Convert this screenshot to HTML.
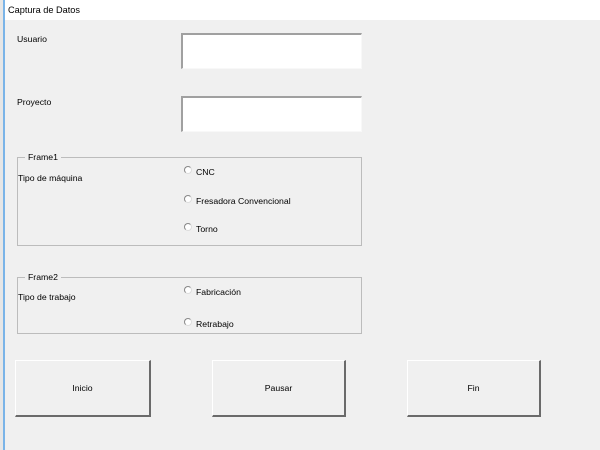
<!DOCTYPE html>
<html><head><meta charset="utf-8"><style>
*{margin:0;padding:0;box-sizing:border-box}
body{width:600px;height:450px;background:#f0f0f0;font-family:"Liberation Sans",sans-serif;font-size:8.7px;color:#000;position:relative;overflow:hidden}
.a{position:absolute}
.tb{background:#fff;border-top:2px solid #a0a0a0;border-left:2px solid #a0a0a0;border-right:1px solid #f8f8f8;border-bottom:1px solid #f8f8f8}
.fr{border:1px solid #bcbcbc}
.leg{background:#f0f0f0;padding:0 3px}
.r{width:8px;height:8px;border-radius:50%;border:1px solid #888;background:#fff;border-right-color:#ddd;border-bottom-color:#ddd}
.btn{border:1px solid #fff;border-right:2px solid #6a6a6a;border-bottom:2px solid #6a6a6a;display:flex;align-items:center;justify-content:center;background:#f0f0f0}
</style></head><body>
<div class="a" style="left:0;top:0;width:4px;height:450px;background:#e6e6e6"></div>
<div class="a" style="left:3px;top:0;width:2px;height:450px;background:#7ab4e8"></div>
<div class="a" style="left:5px;top:0;width:595px;height:20px;background:#fff"></div>
<div class="a" style="left:8px;top:5px;font-size:9.2px">Captura de Datos</div>
<div class="a" style="left:17px;top:34px">Usuario</div>
<div class="a tb" style="left:181px;top:33px;width:181px;height:36px"></div>
<div class="a" style="left:17px;top:97px">Proyecto</div>
<div class="a tb" style="left:181px;top:96px;width:181px;height:36px"></div>

<div class="a fr" style="left:17px;top:157px;width:345px;height:89px"></div>
<div class="a leg" style="left:25px;top:152px">Frame1</div>
<div class="a" style="left:18px;top:173px">Tipo de máquina</div>
<div class="a r" style="left:184px;top:166px"></div><div class="a" style="left:196px;top:167px">CNC</div>
<div class="a r" style="left:184px;top:195px"></div><div class="a" style="left:196px;top:196px">Fresadora Convencional</div>
<div class="a r" style="left:184px;top:223px"></div><div class="a" style="left:196px;top:224px">Torno</div>

<div class="a fr" style="left:17px;top:277px;width:345px;height:57px"></div>
<div class="a leg" style="left:25px;top:272px">Frame2</div>
<div class="a" style="left:18px;top:292px">Tipo de trabajo</div>
<div class="a r" style="left:184px;top:286px"></div><div class="a" style="left:196px;top:287px">Fabricación</div>
<div class="a r" style="left:184px;top:318px"></div><div class="a" style="left:196px;top:319px">Retrabajo</div>

<div class="a btn" style="left:15px;top:360px;width:136px;height:57px">Inicio</div>
<div class="a btn" style="left:212px;top:360px;width:134px;height:57px">Pausar</div>
<div class="a btn" style="left:407px;top:360px;width:134px;height:57px">Fin</div>
</body></html>
